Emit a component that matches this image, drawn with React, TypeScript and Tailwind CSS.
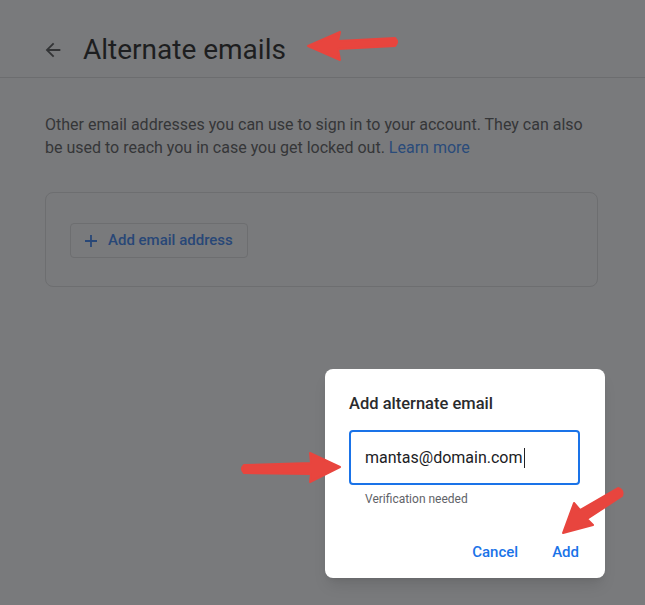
import React from 'react';

export default function App() {
  return (
    <div className="relative w-[645px] h-[605px] overflow-hidden bg-[#797a7c] font-['Roboto',_'Liberation_Sans',_sans-serif]">
      {/* header */}
      <div className="flex items-center h-[78px] pt-[22px] pl-[42px] border-b border-[#6c6d6f]">
        <svg width="22" height="22" viewBox="0 0 24 24" className="text-[#333436]">
          <path d="M20 11H7.83l5.59-5.59L12 4l-8 8 8 8 1.41-1.41L7.83 13H20v-2z" fill="currentColor" />
        </svg>
        <h1 className="ml-[19px] text-[28px] leading-none text-[#1d1e20]">Alternate emails</h1>
      </div>

      {/* body */}
      <div className="px-[45px] pt-[35px]">
        <p className="text-[16px] leading-[23px] text-[#353638] w-[550px]">
          Other email addresses you can use to sign in to your account. They can also be used to reach you in case
          you get locked out. <span className="text-[#2a4b7a]">Learn more</span>
        </p>
        <div className="mt-[33px] w-[553px] h-[95px] rounded-[8px] border border-[#6d6e70] pl-[24px] pt-[30px]">
          <div className="inline-flex items-center h-[35px] pl-[13px] pr-[14px] gap-[10px] rounded-[4px] border border-[#6d6e70] text-[15px] text-[#284777] font-medium">
            <svg width="14" height="14" viewBox="0 0 14 14">
              <path d="M7 1v12M1 7h12" stroke="#284777" strokeWidth="1.8" />
            </svg>
            <span>Add email address</span>
          </div>
        </div>
      </div>

      {/* dialog */}
      <div className="absolute left-[325px] top-[369px] w-[280px] h-[209px] bg-white rounded-[8px] shadow-lg px-[24px] pt-[25px]">
        <div className="text-[16.5px] font-medium text-[#2a2b2d] leading-[20px]">Add alternate email</div>
        <div className="mt-[16px] h-[55px] w-[231px] rounded-[4px] border-2 border-[#1a73e8] flex items-center pl-[14px]">
          <span className="text-[16px] text-[#202124]">mantas@domain.com</span>
          <span className="ml-[1px] w-[1px] h-[20px] bg-[#202124]" />
        </div>
        <div className="mt-[5px] pl-[16px] text-[12px] text-[#5f6368]">Verification needed</div>
        <div className="mt-[33px] flex justify-end gap-[34px] pr-[2px] text-[15px] font-medium text-[#1a73e8]">
          <span>Cancel</span>
          <span>Add</span>
        </div>
      </div>

      {/* annotation arrows */}
      <svg className="absolute left-0 top-0" width="645" height="605" viewBox="0 0 645 605">
        <g fill="#e8453e" stroke="#e8453e" strokeLinejoin="round">
          <path d="M308 46 L340 32 L338 41 L395 38 Q399 42 395 46 L338 49 L340 60 Z" strokeWidth="2" />
          <path d="M340 467 L310 453 L311 463 L244 465 Q240 469 244 473 L311 474 L310 482 Z" strokeWidth="2" />
          <path d="M563 533 L574 503 L580 510 L618 488 Q624 490 622 496 L587 519 L593 525 Z" strokeWidth="2" />
        </g>
      </svg>
    </div>
  );
}
